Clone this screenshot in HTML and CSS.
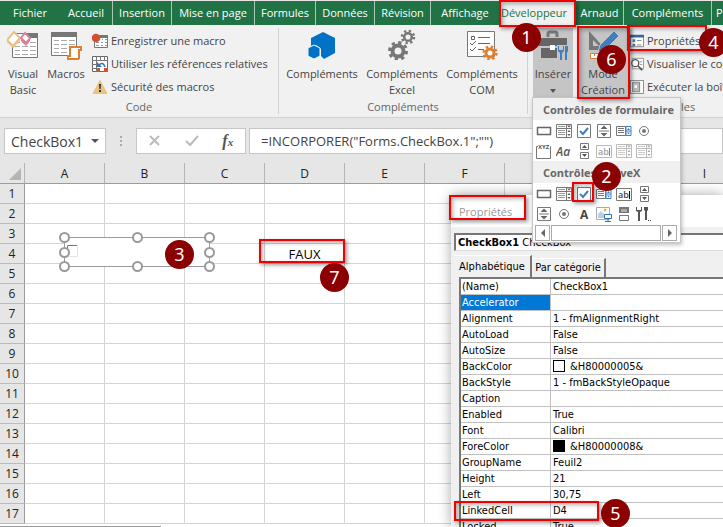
FILE: index.html
```html
<!DOCTYPE html>
<html lang="fr">
<head>
<meta charset="UTF-8" />
<meta name="viewport" content="width=device-width, initial-scale=1" />
<title>Excel - Développeur</title>
<link rel="stylesheet" href="styles.css">
</head>
<body>

<nav class="tabs">
  <a href="#" class="file">Fichier</a>
  <a href="#">Accueil</a>
  <a href="#">Insertion</a>
  <a href="#">Mise en page</a>
  <a href="#">Formules</a>
  <a href="#">Données</a>
  <a href="#">Révision</a>
  <a href="#">Affichage</a>
  <a href="#" class="active">Développeur</a>
  <a href="#">Arnaud</a>
  <a href="#">Compléments</a>
  <a href="#">P</a>
</nav>

<section class="ribbon">
  <div class="group code">
    <div class="tools">
      <button class="big">
        <svg width="32" height="32" viewBox="0 0 32 32">
          <path d="M5.500 5.500h25v24h-25z" fill="#fff" stroke="#777"/>
          <path d="M20 5h11v5H20z" fill="#777"/>
          <path d="M8 14.500h5m2 0h6m2 0h6M8 18.500h5m2 0h6m2 0h6M8 22.500h5m2 0h6m2 0h6M8 26.500h5m2 0h6m2 0h6" stroke="#aaa"/>
          <path d="M7 4l6 6-7 8-6-6z" fill="#fff" stroke="#eac282" stroke-width="2"/>
          <path d="M0 12l6 6 7-8v3l-7 7-6-6z" fill="#eac282"/>
          <path d="M18 5l5 5-4 5-5-5z" fill="#fff" stroke="#dc7f98" stroke-width="2"/>
          <path d="M14 10l5 5 4-5v3l-4 5-5-5z" fill="#dc7f98"/>
        </svg>
        <span>Visual<br>Basic</span>
      </button>
      <button class="big">
        <svg width="32" height="32" viewBox="0 0 32 32">
          <path d="M1.500 4.500h25v23h-25z" fill="#fff" stroke="#777"/>
          <path d="M1 4h26v5H1z" fill="#777"/>
          <path d="M4 12.500h5m2 0h6m2 0h6M4 16.500h5m2 0h6m2 0h6M4 20.500h5m2 0h6M4 24.500h5m2 0h6" stroke="#aaa"/>
          <path d="M20 19h11v3h-2v8c0 1-1 1-2 1h-9v-3h2z" fill="#fff" stroke="#e07f32" stroke-width="2"/>
        </svg>
        <span>Macros</span>
      </button>
      <div class="list">
        <button class="small">
          <svg width="16" height="16" viewBox="0 0 16 16">
            <path d="M2.500 2.500h13v12h-13z" fill="#fff" stroke="#777"/>
            <path d="M8 2h8v3H8z" fill="#777"/>
            <path d="M4 9.500h3m2 0h2m2 0h2M4 12.500h3m2 0h2m2 0h2M10 6.500h1m2 0h2" stroke="#999"/>
            <circle cx="4" cy="5" r="4.300" fill="#d4502e"/>
          </svg>
          Enregistrer une macro
        </button>
        <button class="small">
          <svg width="16" height="16" viewBox="0 0 16 16">
            <path d="M.5.5h15v15H.5z" fill="#fff" stroke="#666"/>
            <path d="M0 4.500h16M4.500 0v16M8.500 0v4M12.500 0v4M0 8.500h4M0 12.500h4" stroke="#777"/>
            <path d="M5 12h3v4H5zm7 0h4v4h-4z" fill="#d4502e"/>
            <path d="M7 9q4-4 6 2" fill="none" stroke="#2f74b5" stroke-width="1.500"/>
            <path d="M5 6v5h5z" fill="#2f74b5"/>
          </svg>
          Utiliser les références relatives
        </button>
        <button class="small">
          <svg width="16" height="16" viewBox="0 0 16 16">
            <path d="M8 1.500l7 13H1z" fill="#eac282" stroke="#eac282"/>
            <path d="M7 5h2l-.4 5H7.400zM7 11h2v2H7z" fill="#333"/>
          </svg>
          Sécurité des macros
        </button>
      </div>
    </div>
    <div class="caption">Code</div>
  </div>

  <div class="group addins">
    <div class="tools">
      <button class="big">
        <svg width="32" height="32" viewBox="0 0 32 32">
          <path d="M17 4l12 6v15l-11 6-3-3v-7l-5-4-5 1v-8z" fill="#0072c6"/>
          <path d="M8 17l6 3v8l-6 3-6-3v-8z" fill="#0072c6" stroke="#f1f1f1"/>
        </svg>
        <span>Compléments</span>
      </button>
      <button class="big">
        <svg width="32" height="32" viewBox="0 0 32 32">
          <g fill="none" stroke="#777">
            <circle cx="12" cy="23" r="5.500" stroke-width="4"/>
            <circle cx="12" cy="23" r="8.500" stroke-width="3" stroke-dasharray="3.300 3.370"/>
            <circle cx="22" cy="9" r="3.800" stroke-width="2.500"/>
            <circle cx="22" cy="9" r="6" stroke-width="2.500" stroke-dasharray="2.300 2.410"/>
          </g>
        </svg>
        <span>Compléments<br>Excel</span>
      </button>
      <button class="big">
        <svg width="32" height="32" viewBox="0 0 32 32">
          <path d="M1.500 3.500h27v25h-27z" fill="#fff" stroke="#777"/>
          <path d="M12 9.500h12M12 15.500h12M12 21.500h6" stroke="#666"/>
          <path d="M5.500 8.500h3v3h-3zM4 15l2 2 4-4M4 21l2 2 4-4" fill="none" stroke="#666"/>
          <circle cx="24" cy="25" r="4" fill="#fff" stroke="#e07f32" stroke-width="3"/>
          <circle cx="24" cy="25" r="6.400" fill="none" stroke="#e07f32" stroke-width="2.500" stroke-dasharray="2.510 2.510"/>
        </svg>
        <span>Compléments<br>COM</span>
      </button>
    </div>
    <div class="caption">Compléments</div>
  </div>

  <div class="group controls">
    <div class="tools">
      <button class="big pressed">
        <svg width="32" height="32" viewBox="0 0 32 32">
          <path d="M11 9V6q0-2 2-2h5q2 0 2 2v3" fill="none" stroke="#777" stroke-width="3"/>
          <path d="M2 10h28v8H2zM4 20h24v10H4z" fill="#666"/>
          <path d="M13 17h5v5h-5z" fill="#fff"/>
          <path d="M20 17h12v16H20z" fill="#c5c5c5"/>
          <path d="M21 18v5l2 2v7h2v-7l2-2v-5l-1 0v4h-4v-4zM28 18h3v5l-1 2v7h-2v-7z" fill="#3f7fc0"/>
        </svg>
        <span>Insérer<br><i class="arrow"></i></span>
      </button>
      <button class="big pressed">
        <svg width="32" height="32" viewBox="0 0 32 32">
          <path d="M2 3v19h17zM6 12l6 6H6z" fill="#777" fill-rule="evenodd"/>
          <path d="M13 17L27 3l5 5-14 14-7 2z" fill="#3f7fc0" stroke="#c5c5c5"/>
          <path d="M3.500 25.500h26v5h-26z" fill="#fff" stroke="#e07f32"/>
          <path d="M7.500 25v3m4-3v3m4-3v3m4-3v3m4-3v3" stroke="#e07f32"/>
        </svg>
        <span>Mode<br>Création</span>
      </button>
      <div class="list">
        <button class="small">
          <svg width="14" height="14" viewBox="0 0 16 16">
            <path d="M.5 1.500h15v13H.5z" fill="#fff" stroke="#777"/>
            <path d="M0 1h16v3H0z" fill="#3567a0"/>
            <path d="M3 6h3v3H3zm0 5h3v3H3z" fill="#3f7fc0"/>
            <path d="M8 7.500h5M8 12.500h5" stroke="#777"/>
          </svg>
          Propriétés
        </button>
        <button class="small">
          <svg width="14" height="14" viewBox="0 0 16 16">
            <path d="M2.500 1.500h13v12h-13z" fill="#fff" stroke="#888"/>
            <path d="M11 5.500h3M11 8.500h3" stroke="#888"/>
            <circle cx="6" cy="7" r="4" fill="#fff" stroke="#555" stroke-width="1.500"/>
            <path d="M9 10l5 5" stroke="#555" stroke-width="2"/>
          </svg>
          Visualiser le code
        </button>
        <button class="small">
          <svg width="14" height="14" viewBox="0 0 16 16">
            <path d="M.5.5h15v15H.5z" fill="#fff" stroke="#777"/>
            <path d="M3 2.500h8v11H3z" fill="#bbb" stroke="#777"/>
            <path d="M5 6h3v3H5z" fill="#fff"/>
          </svg>
          Exécuter la boîte
        </button>
      </div>
    </div>
    <div class="caption">Contrôles</div>
  </div>
</section>

<section class="formula-bar">
  <label class="name-box">
    <input type="text" value="CheckBox1" aria-label="Zone Nom">
    <i class="arrow"></i>
  </label>
  <span class="dots"><i></i><i></i><i></i></span>
  <div class="fx">
    <button aria-label="Annuler"><svg width="12" height="12" viewBox="0 0 12 12"><path d="M1 1l9 9M10 1l-9 9" stroke="#bbb" stroke-width="2"/></svg></button>
    <button aria-label="Entrer"><svg width="14" height="12" viewBox="0 0 14 12"><path d="M1 6l4 4 8-9" fill="none" stroke="#bbb" stroke-width="2"/></svg></button>
    <button aria-label="Fonction"><b>f</b><small>x</small></button>
  </div>
  <input class="formula" type="text" value='=INCORPORER("Forms.CheckBox.1";"")' aria-label="Formule">
</section>

<main class="sheet">
  <table id="grid">
    <thead>
      <tr><th class="corner"><svg width="12" height="12" viewBox="0 0 12 12"><path d="M12 0v12H0z" fill="#b4b4b4"/></svg></th></tr>
    </thead>
    <tbody></tbody>
  </table>
  <div class="sheet-end"></div>
</main>

<!-- selected ActiveX checkbox on the sheet -->
<svg class="shape" width="157" height="42" viewBox="0 0 157 42">
  <path d="M6 6h145v29H6z" fill="#fff"/>
  <path d="M8.500 25V14.500H19" fill="none" stroke="#777"/>
  <path d="M18.500 14v11.500H8" fill="none" stroke="#e3e3e3"/>
  <path d="M5.500 6.500h145v29H5.500z" fill="none" stroke="#999"/>
  <g fill="#fff" stroke="#999" stroke-width="2">
    <circle cx="5.500" cy="6.500" r="4.500"/><circle cx="78.500" cy="6.500" r="4.500"/><circle cx="150.500" cy="6.500" r="4.500"/>
    <circle cx="5.500" cy="21.500" r="4.500"/><circle cx="150.500" cy="21.500" r="4.500"/>
    <circle cx="5.500" cy="35.500" r="4.500"/><circle cx="78.500" cy="35.500" r="4.500"/><circle cx="150.500" cy="35.500" r="4.500"/>
  </g>
</svg>

<section class="properties">
  <h2>Propriétés</h2>
  <div class="object"><b>CheckBox1</b> CheckBox</div>
  <div class="prop-tabs">
    <button class="on">Alphabétique</button>
    <button>Par catégorie</button>
  </div>
  <table>
    <tr><th>(Name)</th><td>CheckBox1</td></tr>
    <tr class="selected"><th>Accelerator</th><td></td></tr>
    <tr><th>Alignment</th><td>1 - fmAlignmentRight</td></tr>
    <tr><th>AutoLoad</th><td>False</td></tr>
    <tr><th>AutoSize</th><td>False</td></tr>
    <tr><th>BackColor</th><td><i class="swatch white"></i>&amp;H80000005&amp;</td></tr>
    <tr><th>BackStyle</th><td>1 - fmBackStyleOpaque</td></tr>
    <tr><th>Caption</th><td></td></tr>
    <tr><th>Enabled</th><td>True</td></tr>
    <tr><th>Font</th><td>Calibri</td></tr>
    <tr><th>ForeColor</th><td><i class="swatch black"></i>&amp;H80000008&amp;</td></tr>
    <tr><th>GroupName</th><td>Feuil2</td></tr>
    <tr><th>Height</th><td>21</td></tr>
    <tr><th>Left</th><td>30,75</td></tr>
    <tr><th>LinkedCell</th><td>D4</td></tr>
    <tr><th>Locked</th><td>True</td></tr>
  </table>
</section>

<svg class="defs">
  <symbol id="i-button" viewBox="0 0 16 16"><path d="M1.500 4.500h13v7h-13z" fill="#fff" stroke="#666" stroke-width="1.500"/></symbol>
  <symbol id="i-combo" viewBox="0 0 16 16"><path d="M.5 1.500h15v13H.5zM.5 5.500h15M10.500 1v13" fill="#fff" stroke="#777"/><path d="M2 3.500h7M2 7.500h7M2 9.500h7M2 11.500h7" stroke="#999"/><path d="M11 2.500h4l-2 2zM13 7l1.500 2h-3zM11.500 11h3L13 13z" fill="#555"/></symbol>
  <symbol id="i-check" viewBox="0 0 16 16"><path d="M1.500 1.500h13v13h-13z" fill="#fff" stroke="#777"/><path d="M4 8l3 3 5-6" fill="none" stroke="#3f7fc0" stroke-width="2"/></symbol>
  <symbol id="i-spin" viewBox="0 0 16 16"><path d="M1.500 1.500h13v13h-13zM3 8h10" fill="#fff" stroke="#777"/><path d="M8 2.500L11.500 6h-7zM8 13.500L4.500 10h7z" fill="#666"/></symbol>
  <symbol id="i-list" viewBox="0 0 16 16"><path d="M.5 3.500h9v9h-9zM2 5.500h6M2 7.500h6M2 9.500h6" fill="#fff" stroke="#777"/><path d="M10 3.500h5v9h-5zM10 8h5" fill="#fff" stroke="#3f7fc0"/><path d="M12.500 5l1.500 2h-3zM12.500 11.500L11 9.500h3z" fill="#3f7fc0"/></symbol>
  <symbol id="i-radio" viewBox="0 0 16 16"><circle cx="8" cy="8" r="4.500" fill="#fff" stroke="#777"/><circle cx="8" cy="8" r="2" fill="#777"/></symbol>
  <symbol id="i-frame" viewBox="0 0 16 16"><path d="M2 3.500H.5v12h14v-12H14" fill="none" stroke="#777"/><text x="2" y="6" font-size="6" font-weight="bold" fill="#555">XYZ</text></symbol>
  <symbol id="i-aa" viewBox="0 0 16 16"><text x="0" y="13" font-size="12" font-style="italic" font-weight="600" fill="#555">Aa</text></symbol>
  <symbol id="i-scroll" viewBox="0 0 16 16"><path d="M4.500.5h8v6h-8zM4.500 9.500h8v6h-8z" fill="#fff" stroke="#777"/><path d="M8.500 2l2.500 3H6zM8.500 14L6 11h5z" fill="#555"/></symbol>
  <symbol id="i-abl" viewBox="0 0 16 16"><path d="M.5 2.500h15v12H.5z" fill="#fff" stroke="#777"/><text x="2" y="12" font-size="9" font-weight="600" fill="#444">ab</text><path d="M13.500 5v8" stroke="#000"/></symbol>
  <symbol id="i-a" viewBox="0 0 16 16"><text x="4" y="13" font-size="12" font-weight="bold" fill="#444">A</text></symbol>
  <symbol id="i-image" viewBox="0 0 16 16"><path d="M.5 1.500h13v12H.5z" fill="#fff" stroke="#aaa"/><circle cx="9" cy="4" r="1.500" fill="#eab54f"/><path d="M2 12V8l3-3 3 3v4z" fill="#b8cfe6"/><path d="M8.500 8.500h7v4h-7zM12 13v2M9 15.500h6" fill="#fff" stroke="#2f74b5"/></symbol>
  <symbol id="i-toggle" viewBox="0 0 16 16"><path d="M3 1h10v6H3z" fill="#777"/><path d="M5 3h6v3H5z" fill="#aaa"/><path d="M3.500 9.500h9v5h-9z" fill="#fff" stroke="#777"/></symbol>
  <symbol id="i-more" viewBox="0 0 16 16"><path d="M0 1v4l2 1v9h2V6l2-1V1H5v3H1V1zM8 1h4v3l-1 1v9H9V5L8 4z" fill="#555"/><path d="M12 14.500h1m1 0h1" stroke="#444"/></symbol>
</svg>

<aside class="menu">
  <h3>Contrôles de formulaire</h3>
  <div class="icons">
    <button aria-label="Bouton"><svg><use href="#i-button"/></svg></button>
    <button aria-label="Zone de liste déroulante"><svg><use href="#i-combo"/></svg></button>
    <button aria-label="Case à cocher"><svg><use href="#i-check"/></svg></button>
    <button aria-label="Toupie"><svg><use href="#i-spin"/></svg></button>
    <button aria-label="Zone de liste"><svg><use href="#i-list"/></svg></button>
    <button aria-label="Case d'option"><svg><use href="#i-radio"/></svg></button>
    <button aria-label="Zone de groupe"><svg><use href="#i-frame"/></svg></button>
    <button aria-label="Étiquette"><svg><use href="#i-aa"/></svg></button>
    <button aria-label="Barre de défilement"><svg><use href="#i-scroll"/></svg></button>
    <button aria-label="Champ de texte" disabled><svg><use href="#i-abl"/></svg></button>
    <button aria-label="Liste modifiable" disabled><svg><use href="#i-combo"/></svg></button>
    <button aria-label="Liste déroulante modifiable" disabled><svg><use href="#i-combo"/></svg></button>
  </div>
  <h3>Contrôles ActiveX</h3>
  <div class="icons">
    <button aria-label="Bouton de commande"><svg><use href="#i-button"/></svg></button>
    <button aria-label="Zone de liste déroulante"><svg><use href="#i-combo"/></svg></button>
    <button aria-label="Case à cocher"><svg><use href="#i-check"/></svg></button>
    <button aria-label="Zone de liste"><svg><use href="#i-list"/></svg></button>
    <button aria-label="Zone de texte"><svg><use href="#i-abl"/></svg></button>
    <button aria-label="Barre de défilement"><svg><use href="#i-scroll"/></svg></button>
    <button aria-label="Toupie"><svg><use href="#i-spin"/></svg></button>
    <button aria-label="Case d'option"><svg><use href="#i-radio"/></svg></button>
    <button aria-label="Étiquette"><svg><use href="#i-a"/></svg></button>
    <button aria-label="Image"><svg><use href="#i-image"/></svg></button>
    <button aria-label="Bouton bascule"><svg><use href="#i-toggle"/></svg></button>
    <button aria-label="Autres contrôles"><svg><use href="#i-more"/></svg></button>
  </div>
  <div class="hscroll">
    <button aria-label="Précédent"><i class="left"></i></button>
    <span></span>
    <button aria-label="Suivant"><i class="right"></i></button>
  </div>
</aside>

<!-- step marks -->
<div class="mark m1"></div><div class="mark m2"></div><div class="mark m4"></div>
<div class="mark m5"></div><div class="mark m6"></div><div class="mark m7"></div>
<div class="mark mp"></div>
<span class="step s1">1</span>
<span class="step s2">2</span>
<span class="step s3">3</span>
<span class="step s4">4</span>
<span class="step s5">5</span>
<span class="step s6">6</span>
<span class="step s7">7</span>

<script>
  const cols = 'ABCDEFGHI'.split('');
  const cells = { D4: 'FAUX' };
  const head = document.querySelector('#grid thead tr');
  const tbody = document.querySelector('#grid tbody');

  cols.forEach(c => {
    const th = document.createElement('th');
    th.textContent = c;
    head.appendChild(th);
  });

  for (let r = 1; r <= 17; r++) {
    const tr = document.createElement('tr');
    tr.innerHTML = `<th>${r}</th>` + cols.map(c => `<td>${cells[c + r] || ''}</td>`).join('');
    tbody.appendChild(tr);
  }
</script>

</body>
</html>
```
FILE: styles.css
```css
* { box-sizing: border-box; }
body {
  margin: 0;
  position: relative;
  min-height: 100vh;
  overflow: hidden;
  background: #fff;
  font-family: "Open Sans", "Noto Sans", sans-serif;
  font-size: 11px;
  color: #444;
}
button {
  border: none;
  background: none;
  padding: 0;
  margin: 0;
  font: inherit;
  color: inherit;
}
svg { display: block; flex: none; }

/* tabs */
.tabs {
  display: grid;
  grid-template-columns: 60px 53px 59px 83px 61px 59px 56px 69px 76px 48px 88px 60px;
  height: 25px;
  border-top: 1px solid #e6e6e6;
  background: #217346;
  overflow: hidden;
}
.tabs a {
  color: #fff;
  text-decoration: none;
  text-align: center;
  line-height: 24px;
  white-space: nowrap;
  border-right: 1px solid #a6c7b5;
}
.tabs .file { border-right: none; }
.tabs .active {
  background: #f1f1f1;
  color: #217346;
  border-right: none;
  padding-right: 8px;
}
.tabs a:last-child { text-align: left; padding-left: 4px; }

/* ribbon */
.ribbon {
  display: flex;
  height: 93px;
  padding: 3px 0 3px;
  background: #f1f1f1;
  border-bottom: 1px solid #d2d2d2;
  overflow: hidden;
}
.group {
  display: flex;
  flex-direction: column;
  justify-content: space-between;
  border-right: 1px solid #d2d2d2;
  flex: none;
}
.code { width: 279px; }
.addins { width: 249px; }
.controls { width: 286px; }
.tools { display: flex; }
.caption {
  text-align: center;
  line-height: 14px;
  color: #666;
}
.big {
  display: flex;
  flex-direction: column;
  align-items: center;
  flex: none;
  line-height: 16px;
  gap: 6px;
  height: 70px;
}
.code .tools { padding-left: 3px; }
.code .big { width: 40px; }
.code .big + .big { width: 46px; }
.addins .tools { padding-left: 3px; }
.addins .big { width: 80px; }
.controls .tools { padding-left: 5px; }
.controls .big { width: 40px; }
.controls .big + .big { width: 50px; margin-left: 5px; }
.pressed { background: #c5c5c5; }
.list { display: flex; flex-direction: column; padding: 1px 0 0 3px; }
.controls .list { padding-left: 2px; }
.small {
  display: flex;
  align-items: center;
  gap: 3px;
  height: 23px;
  white-space: nowrap;
}
.arrow {
  display: inline-block;
  border: 3px solid transparent;
  border-top: 4px solid #555;
  border-bottom: none;
  vertical-align: middle;
}

/* formula bar */
.formula-bar {
  display: flex;
  height: 45px;
  padding: 10px 0 9px 4px;
  background: #e6e6e6;
}
.name-box, .fx, .formula {
  border: 1px solid #c6c6c6;
  background: #fff;
}
.name-box {
  display: flex;
  align-items: center;
  width: 102px;
  padding: 0 6px;
}
.name-box input {
  width: 80px;
  border: none;
  padding: 0;
  font: inherit;
  font-size: 14px;
  color: #444;
}
.name-box .arrow { border-width: 4px 4px 0; }
.dots {
  display: flex;
  flex-direction: column;
  justify-content: center;
  align-items: center;
  gap: 2px;
  width: 30px;
}
.dots i { width: 2px; height: 2px; background: #aaa; }
.fx {
  display: flex;
  align-items: center;
  justify-content: space-around;
  width: 110px;
}
.fx button:last-child {
  font-family: "Liberation Serif", serif;
  font-style: italic;
  font-size: 16px;
  line-height: 20px;
  color: #555;
}
.fx small { font-size: 11px; font-weight: bold; }
.formula {
  flex: 1;
  min-width: 0;
  margin-left: 3px;
  padding: 0 11px;
  font: inherit;
  font-size: 13px;
  color: #444;
}

/* sheet */
.sheet { overflow: hidden; }
.sheet table {
  width: 745px;
  table-layout: fixed;
  border-collapse: separate;
  border-spacing: 0;
  font-size: 13px;
  color: #222;
}
.sheet th, .sheet td {
  height: 20px;
  padding: 1px 0 0;
  line-height: 18px;
  text-align: center;
  font-weight: normal;
  border-right: 1px solid #d4d4d4;
  border-bottom: 1px solid #d4d4d4;
}
.sheet th { background: #e6e6e6; font-size: 12px; }
.sheet thead th {
  height: 21px;
  border-color: #9b9b9b;
  border-right-color: #b5b5b5;
}
.sheet tbody th { border-right-color: #9b9b9b; border-bottom-color: #bbb; }
.sheet .corner { width: 25px; }
.corner svg { margin-left: 9px; }
.sheet td { color: #000; }
.sheet-end {
  width: 161px;
  height: 3px;
  border-bottom: 1px solid #999;
}
.shape { position: absolute; left: 59px; top: 231px; }

/* properties window */
.properties {
  position: absolute;
  left: 451px;
  top: 195px;
  right: 0;
  bottom: 0;
  overflow: hidden;
  background: #f0f0f0;
  box-shadow: 0 0 12px rgba(0,0,0,0.35);
  font-family: "DejaVu Sans Condensed", "DejaVu Sans", sans-serif;
  font-size: 11px;
  color: #000;
  clip-path: inset(-14px 0 0 -14px);
}
.properties h2 {
  margin: 0;
  height: 32px;
  padding-left: 8px;
  background: #fff;
  color: #999;
  font-family: "Open Sans", sans-serif;
  font-size: 11px;
  font-weight: normal;
  line-height: 34px;
}
.object {
  margin: 6px 0 4px 3px;
  height: 18px;
  padding-left: 2px;
  border: 2px solid #777;
  border-right: none;
  border-bottom: 1px solid #ddd;
  background: #fff;
  line-height: 16px;
}
.prop-tabs { display: flex; align-items: flex-end; padding-left: 3px; }
.prop-tabs button {
  height: 19px;
  width: 74px;
  line-height: 16px;
  border-right: 2px solid #777;
  border-top: 1px solid #fff;
}
.prop-tabs .on { height: 22px; width: 78px; }
.properties table {
  margin-left: 8px;
  width: 100%;
  table-layout: fixed;
  border-collapse: separate;
  border-spacing: 0;
  border: 2px solid #777;
  background: #fff;
}
.properties th, .properties td {
  height: 16px;
  padding: 0 0 0 2px;
  text-align: left;
  font-weight: normal;
  line-height: 15px;
  border-bottom: 1px solid #c0c0c0;
  white-space: nowrap;
}
.properties th { width: 90px; padding-left: 1px; border-right: 1px solid #c0c0c0; }
.selected th { background: #0078d7; color: #fff; }
.swatch {
  display: inline-block;
  width: 12px;
  height: 12px;
  margin-right: 5px;
  border: 1px solid #000;
  vertical-align: top;
  margin-top: 1px;
}
.white { background: #fff; }
.black { background: #000; }

/* insert menu */
.defs { display: none; }
.menu {
  position: absolute;
  left: 532px;
  top: 97px;
  width: 149px;
  border: 1px solid #c6c6c6;
  background: #fff;
  box-shadow: 1px 2px 4px rgba(0,0,0,0.25);
}
.menu h3 {
  margin: 0;
  height: 22px;
  padding-left: 10px;
  background: #f0f0f0;
  font-size: 11px;
  font-weight: bold;
  line-height: 24px;
  color: #666;
  white-space: nowrap;
}
.icons {
  display: grid;
  grid-template-columns: repeat(6, 20px);
  grid-auto-rows: 20px;
  padding: 1px 0 0 1px;
}
.icons button { display: grid; place-items: center; }
.icons button:disabled { opacity: 0.5; }
.icons svg { width: 16px; height: 16px; }
.hscroll { display: flex; gap: 1px; height: 16px; margin: 1px 3px 1px 2px; }
.hscroll button { width: 15px; border: 1px solid #aaa; display: grid; place-items: center; }
.hscroll span { flex: 1; border: 1px solid #aaa; }
.left, .right { border: 4px solid transparent; }
.left { border-right-color: #666; border-left: none; }
.right { border-left-color: #666; border-right: none; }

/* red frames and numbered steps */
.mark {
  position: absolute;
  border: 2px solid #f00000;
  box-shadow: 2px 2px 4px rgba(0,0,0,0.4), inset 2px 2px 4px rgba(0,0,0,0.3);
}
.m1 { left: 499px; top: 0; width: 77px; height: 27px; }
.m2 { left: 572px; top: 182px; width: 22px; height: 20px; }
.m4 { left: 627px; top: 25px; width: 80px; height: 26px; }
.m5 { left: 454px; top: 501px; width: 145px; height: 20px; }
.m6 { left: 577px; top: 26px; width: 53px; height: 73px; }
.m7 { left: 259px; top: 239px; width: 86px; height: 24px; }
.mp { left: 449px; top: 195px; width: 77px; height: 25px; }
.step {
  position: absolute;
  width: 29px;
  height: 29px;
  border-radius: 50%;
  background: #8b0000;
  color: #fff;
  font-family: "Noto Sans", sans-serif;
  font-size: 18px;
  line-height: 29px;
  text-align: center;
}
.s1 { left: 512px; top: 23px; }
.s2 { left: 592px; top: 162px; }
.s3 { left: 165px; top: 240px; }
.s4 { left: 699px; top: 28px; }
.s5 { left: 601px; top: 499px; }
.s6 { left: 597px; top: 45px; }
.s7 { left: 320px; top: 263px; }
```
